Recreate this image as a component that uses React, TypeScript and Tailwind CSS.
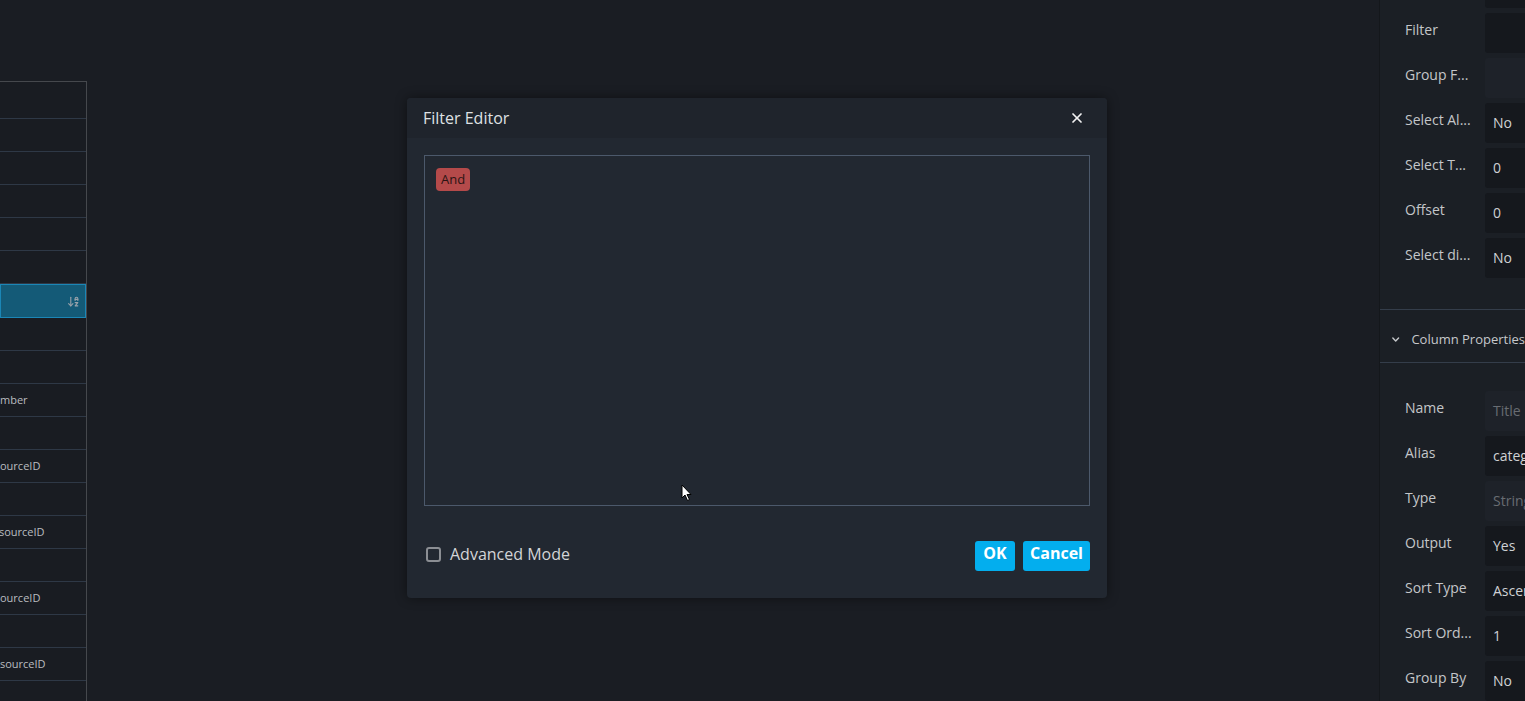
import { ArrowDownAZ, ChevronDown, X } from 'lucide-react'

const font = { fontFamily: '"Open Sans", "Noto Sans", sans-serif' }

const leftRows = [
  { text: '' },
  { text: ')', cls: '-ml-[4px]' },
  { text: '' },
  { text: '' },
  { text: '' },
  { text: '' },
  { text: '', selected: true },
  { text: '' },
  { text: '' },
  { text: 'mber' },
  { text: '' },
  { text: 'ourceID' },
  { text: '' },
  { text: 'sourceID', cls: '-ml-[1px]' },
  { text: '' },
  { text: 'ourceID' },
  { text: '' },
  { text: 'sourceID' },
  { text: '' }
]

const topProps = [
  { label: '', value: '', kind: 'input' },
  { label: 'Filter', value: '', kind: 'input' },
  { label: 'Group F...', value: '', kind: 'disabled' },
  { label: 'Select Al...', value: 'No', kind: 'input' },
  { label: 'Select T...', value: '0', kind: 'input' },
  { label: 'Offset', value: '0', kind: 'input' },
  { label: 'Select di...', value: 'No', kind: 'input' }
]

const columnProps = [
  { label: 'Name', value: 'Title', kind: 'disabled' },
  { label: 'Alias', value: 'category', kind: 'input' },
  { label: 'Type', value: 'String', kind: 'disabled' },
  { label: 'Output', value: 'Yes', kind: 'input' },
  { label: 'Sort Type', value: 'Ascending', kind: 'input' },
  { label: 'Sort Ord...', value: '1', kind: 'input' },
  { label: 'Group By', value: 'No', kind: 'input' }
]

function PropRow ({ label, value, kind }: { label: string, value: string, kind: string }) {
  return (
    <div className="flex h-[40px] items-start">
      <div className="w-[105px] shrink-0 truncate pl-[25px] pr-[10px] pt-[7px] text-[14px] leading-[19px] text-[#c4c6c9]">{label}</div>
      <div className={`h-[40px] min-w-0 flex-1 overflow-hidden whitespace-nowrap rounded-l-[3px] pl-[8px] pt-[10px] text-[14px] leading-[20px] ${kind === 'disabled' ? 'bg-[#1e2229] text-[#686c72]' : 'bg-[#15181d] text-[#cfd1d4]'}`}>
        {value}
      </div>
    </div>
  )
}

export default function App () {
  return (
    <div className="relative h-[701px] w-[1525px] overflow-hidden bg-[#1a1d23]" style={font}>
      <div className="flex h-full">
        {/* left table */}
        <div className="mt-[81px] w-[87px] shrink-0 self-start overflow-hidden border-t border-r border-[#45484d] bg-[#191c22]">
          {leftRows.map((r, i) => (
            <div
              key={i}
              className={`flex items-center whitespace-nowrap text-[11px] text-[#b9bcc0] ${i === 0 ? 'h-[37px]' : 'h-[33px]'} ${r.selected ? 'h-[34px] border border-[#1b86b6] bg-[#145a77]' : 'border-b border-[#2e3846]'}`}
            >
              <span className={r.cls ?? ''}>{r.text}</span>
              {r.selected && (
                <span className="ml-auto mr-[5px] text-[#9aa3ab]">
                  <ArrowDownAZ size={13} strokeWidth={2} />
                </span>
              )}
            </div>
          ))}
        </div>

        <div className="flex-1" />

        {/* right properties panel */}
        <div className="w-[146px] shrink-0 border-l border-[#14171b] bg-[#1b1f25]">
          <div className="-mt-[32px] flex flex-col gap-[5px]">
            {topProps.map((p, i) => <PropRow key={i} {...p} />)}
          </div>
          <div className="mt-[31px] border-t border-[#343d4a]" />
          <div className="flex h-[52px] items-center whitespace-nowrap pl-[10px] pt-[7px] text-[13px] text-[#c6c8cb]">
            <ChevronDown size={15} strokeWidth={3} className="mr-[10px] text-[#c6c8cb]" />
            Column Properties
          </div>
          <div className="border-t border-[#343d4a]" />
          <div className="mt-[28px] flex flex-col gap-[5px]">
            {columnProps.map((p, i) => <PropRow key={i} {...p} />)}
          </div>
        </div>
      </div>

      {/* modal */}
      <div className="absolute left-[407px] top-[98px] flex h-[500px] w-[700px] flex-col overflow-hidden rounded-[4px] bg-[#222831] shadow-[0_0_12px_rgba(0,0,0,0.45)]">
        <div className="flex h-[40px] shrink-0 items-center justify-between bg-[#1f242c] pl-[16px] pr-[22px]">
          <span className="text-[16px] text-[#dfe1e4]">Filter Editor</span>
          <X size={16} strokeWidth={2.6} className="text-[#f2f2f2]" />
        </div>
        <div className="px-[17px] pt-[17px]">
          <div className="h-[351px] border border-[#4c596b] px-[11px] pt-[10px]">
            <span className="inline-block rounded-[4px] bg-[#b44a4a] px-[5px] py-[2px] text-[13px] leading-[19px] text-[#2b1414]">And</span>
          </div>
        </div>
        <div className="flex items-start justify-between pl-[19px] pr-[17px] pt-[35px]">
          <label className="mt-[1px] flex items-center gap-[9px] text-[16px] text-[#d2d4d7]">
            <span className="h-[15px] w-[15px] rounded-[3px] border-2 border-[#8b8e93]" />
            Advanced Mode
          </label>
          <div className="flex gap-[8px]">
            <button className="h-[30px] w-[40px] rounded-[3px] bg-[#03aeee] pb-[6px] text-[16px] font-bold leading-[22px] text-white">OK</button>
            <button className="h-[30px] w-[67px] rounded-[3px] bg-[#03aeee] pb-[6px] text-[16px] font-bold leading-[22px] text-white">Cancel</button>
          </div>
        </div>
      </div>

      {/* mouse pointer */}
      <svg className="absolute left-[681px] top-[484px]" width="12" height="18" viewBox="0 0 12 18">
        <path d="M1 1 L1 14 L4 11 L6.5 16.5 L8.5 15.5 L6 10.5 L10 10.5 Z" fill="#fff" stroke="#000" strokeWidth="1" />
      </svg>
    </div>
  )
}
